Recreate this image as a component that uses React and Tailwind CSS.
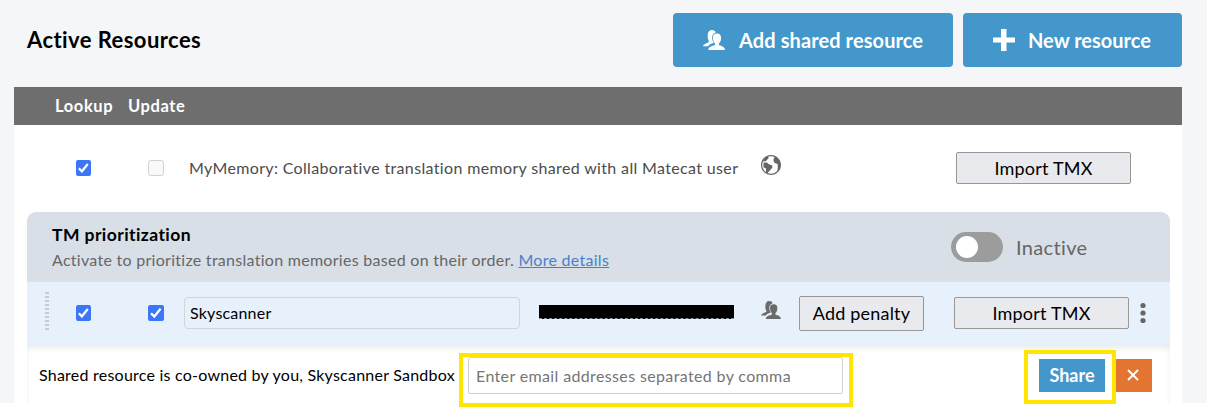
import React, { useState } from 'react';
import { ImEarth } from 'react-icons/im';

function UsersIcon({ className }) {
    return (
        <svg viewBox="0 0 22 20" className={className} fill="currentColor">
            <path d="M9 0C10.9 0 12.3 .9 12.8 2.4C10.4 3 9.1 5 9.1 7.8C9.1 9.6 9.6 11 10.5 12.2V13C8 13.6 6.2 14.4 5.2 16.2H0C.1 14.4 2.4 13.7 5.8 12.2V10.6C5.1 9.7 4.7 8.2 4.7 6C4.7 2.2 6.2 0 9 0Z" />
            <path d="M13.9 3.6C16.8 3.6 18.1 5.4 18.1 8C18.1 10.6 17.2 12.4 15.9 13.4V14.9C18.9 16.1 21.8 16.6 22 20H5.2C5.4 16.6 9 16.1 12 14.9V13.4C10.8 12.4 9.9 10.6 9.9 8C9.9 5.4 11.1 3.6 13.9 3.6Z" />
        </svg>
    );
}

function Checkbox({ className, checked, disabled }) {
    if (disabled) {
        return <span className={`${className} block rounded-[3px] border border-[#d1d1d1] bg-[#f8f8f8]`} />;
    }
    return (
        <span className={`${className} block rounded-[2px] bg-[#3b76f6]`}>
            {checked && (
                <svg viewBox="0 0 16 16" className="block w-full h-full" fill="none" stroke="#fff" strokeWidth="2.4">
                    <path d="M3 8.4L6.3 11.5L12.6 3.8" />
                </svg>
            )}
        </span>
    );
}

function GrayButton({ className, children }) {
    return (
        <button className={`${className} shrink-0 rounded-[2px] border border-[#979797] bg-[#e9eaee] text-lg tracking-[0.2px] text-black whitespace-nowrap`}>
            {children}
        </button>
    );
}

export default function App() {
    const [name, setName] = useState('Skyscanner');
    const [emails, setEmails] = useState('');

    return (
        <div className="w-[1211px] h-[407px] bg-white overflow-hidden font-[Lato,sans-serif]">
            <div className="relative w-[1207px] h-[403px] bg-[#f4f6f8] pl-[14px] pr-[25px]">
                {/* Title and main actions */}
                <div className="flex items-start h-[87px] pt-[13px]">
                    <h1 className="flex-1 pl-[13px] pt-[11px] text-[22px] leading-8 tracking-[0.43px] font-bold text-black">Active Resources</h1>
                    <button className="flex items-center w-[280px] h-[54px] pl-[30px] rounded bg-[#4497cb] text-white text-xl tracking-[0.1px] font-bold whitespace-nowrap">
                        <UsersIcon className="w-[22px] h-[20px] mr-[14px]" />
                        Add shared resource
                    </button>
                    <button className="flex items-center w-[219px] h-[54px] ml-[10px] pl-[30px] rounded bg-[#4497cb] text-white text-xl font-bold whitespace-nowrap">
                        <svg viewBox="0 0 22 22" className="w-[22px] h-[22px] mr-[13px]" fill="currentColor">
                            <path d="M8 0H13.5V8.5H22V13.5H13.5V22H8V13.5H0V8.5H8Z" />
                        </svg>
                        New resource
                    </button>
                </div>

                <div className="h-[316px] bg-white">
                    <div className="flex items-center h-[38px] pt-px bg-[#6e6e6e] text-white text-[16.5px] tracking-[0.6px] font-bold">
                        <span className="w-[73px] ml-[41px]">Lookup</span>
                        <span>Update</span>
                    </div>

                    {/* Public memory */}
                    <div className="flex items-center h-[87px] pb-[2px] pl-[62px]">
                        <Checkbox className="w-[15px] h-4" checked />
                        <Checkbox className="w-4 h-4 ml-[57px]" disabled />
                        <span className="w-[551px] ml-[25px] text-base tracking-[0.35px] text-[#4c4c4c] whitespace-nowrap overflow-hidden">
                            MyMemory: Collaborative translation memory shared with all Matecat user
                        </span>
                        <ImEarth className="w-5 h-5 ml-[21px] mb-1.5 text-[#666]" />
                        <GrayButton className="w-[175px] h-8 ml-[175px]">Import TMX</GrayButton>
                    </div>

                    <div className="ml-[13px] mr-3">
                        <div className="flex h-[70px] pl-[25px] rounded-t-[9px] bg-[#d9dfe7]">
                            <div className="w-[899px] pt-[11px]">
                                <div className="text-[17.5px] leading-6 tracking-[0.42px] font-bold text-black">TM prioritization</div>
                                <div className="text-base leading-[26px] tracking-[0.28px] text-[#666]">
                                    Activate to prioritize translation memories based on their order.{' '}
                                    <a className="text-[#4a7fc8] underline">More details</a>
                                </div>
                            </div>
                            <div className="flex items-center">
                                <span className="flex items-center w-[52px] h-[30px] pl-[5px] rounded-full bg-[#9c9c9c]">
                                    <span className="w-[22px] h-[22px] rounded-full bg-white" />
                                </span>
                                <span className="ml-[13px] text-xl tracking-[0.35px] text-[#666]">Inactive</span>
                            </div>
                        </div>

                        {/* Private resource */}
                        <div className="flex items-center h-[63px] pb-[2px] pl-[18px] bg-[#e7f1fb]">
                            <span className="flex flex-col gap-[2px] w-1 mt-[-3px]">
                                {Array.from({ length: 10 }, (_, i) => (
                                    <span key={i} className="h-[2px] bg-[#c9cbce]" />
                                ))}
                            </span>
                            <Checkbox className="w-[15px] h-4 ml-[27px]" checked />
                            <Checkbox className="w-4 h-4 ml-[57px]" checked />
                            <input
                                value={name}
                                onChange={(e) => setName(e.target.value)}
                                className="w-[336px] h-8 ml-5 px-[5px] rounded border border-[#d0d5db] text-base tracking-[0.2px] text-black"
                            />
                            {/* Masked key */}
                            <span className="w-[195px] h-[14px] ml-[19px] mb-[2px] bg-black border-b border-dashed border-[#8c9299]" />
                            <UsersIcon className="w-5 h-[18px] ml-[27px] mb-[5px] text-[#6b6b6b]" />
                            <GrayButton className="w-[125px] h-[35px] mt-[2px] pb-[2px] ml-[18px]">Add penalty</GrayButton>
                            <GrayButton className="w-[175px] h-8 ml-[30px]">Import TMX</GrayButton>
                            <svg viewBox="0 0 6 22" className="w-[6px] h-[22px] ml-[11px]" fill="#666">
                                <circle cx="3" cy="3.5" r="2.6" />
                                <circle cx="3" cy="11" r="2.6" />
                                <circle cx="3" cy="18.5" r="2.6" />
                            </svg>
                        </div>

                        {/* Share form */}
                        <div className="flex h-[58px] pl-3 bg-white shadow-[inset_0_4px_6px_-1px_rgba(0,0,0,0.09)]">
                            <span className="w-[429px] pt-[18px] text-base tracking-[0.23px] text-black whitespace-nowrap">
                                Shared resource is co-owned by you, Skyscanner Sandbox
                            </span>
                            <input
                                value={emails}
                                onChange={(e) => setEmails(e.target.value)}
                                placeholder="Enter email addresses separated by comma"
                                className="w-[375px] h-[37px] mt-3 px-[7px] rounded-[2px] border border-[#d2d2d2] bg-white text-base tracking-[0.36px] placeholder:text-[#757575]"
                            />
                            <button className="w-[66px] h-[33px] ml-[196px] mt-[14px] pb-px bg-[#4497cb] text-white text-lg font-bold">Share</button>
                            <button className="flex items-center justify-center w-[36px] h-[33px] ml-[11px] mt-[14px] pr-[2px] pb-px bg-[#e47431] text-white">
                                <svg viewBox="0 0 12 12" className="w-3 h-3" fill="none" stroke="currentColor" strokeWidth="2">
                                    <path d="M1 1L11 11M11 1L1 11" />
                                </svg>
                            </button>
                        </div>
                    </div>
                </div>

                {/* Highlight frames */}
                <div className="absolute left-[459px] top-[353px] w-[394px] h-[54px] border-4 border-[#ffe600]" />
                <div className="absolute left-[1024px] top-[350px] w-[92px] h-[54px] border-4 border-[#ffe600]" />
            </div>
        </div>
    );
}
